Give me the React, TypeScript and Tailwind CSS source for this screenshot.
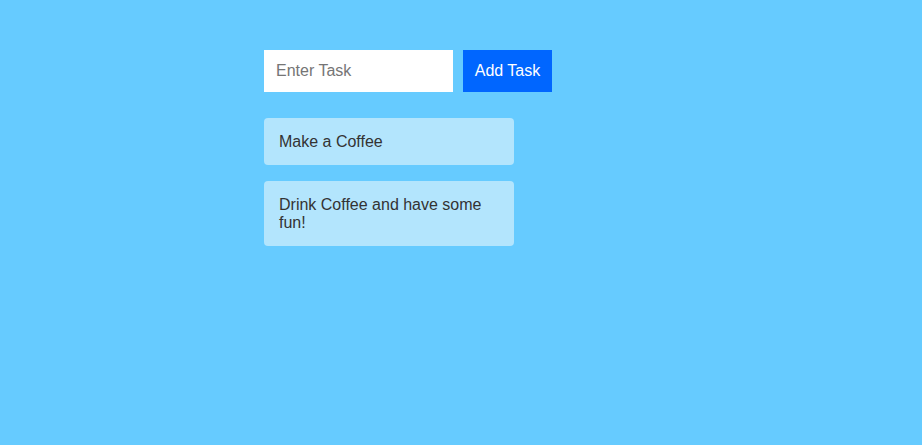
import { useState } from 'react';

export default function App() {
    const [tasks, setTasks] = useState<string[]>(['Make a Coffee', 'Drink Coffee and have some fun!']);
    const [value, setValue] = useState('');

    const addTask = () => {
        if (!value.trim()) return;
        setTasks([...tasks, value.trim()]);
        setValue('');
    };

    return (
        <div className="min-h-[445px] bg-[#66cbff] pt-[50px] pl-[264px] font-['Liberation_Sans',Arial,sans-serif] text-[16px]">
            {/* Input row */}
            <div className="flex gap-[10px]">
                <input
                    value={value}
                    onChange={(e) => setValue(e.target.value)}
                    placeholder="Enter Task"
                    className="h-[42px] w-[189px] bg-white px-[12px] text-[16px] text-[#333] outline-none placeholder:text-[#757575]"
                />
                <button
                    onClick={addTask}
                    className="h-[42px] w-[89px] bg-[#0066ff] text-[16px] text-white"
                >
                    Add Task
                </button>
            </div>

            {/* Task list */}
            <ul className="mt-[26px] flex w-[250px] flex-col gap-[16px]">
                {tasks.map((task, i) => (
                    <li
                        key={i}
                        className="rounded-[4px] bg-[#b3e5fd] px-[15px] py-[14.5px] leading-[18px] text-[#333]"
                    >
                        {task}
                    </li>
                ))}
            </ul>
        </div>
    );
}
